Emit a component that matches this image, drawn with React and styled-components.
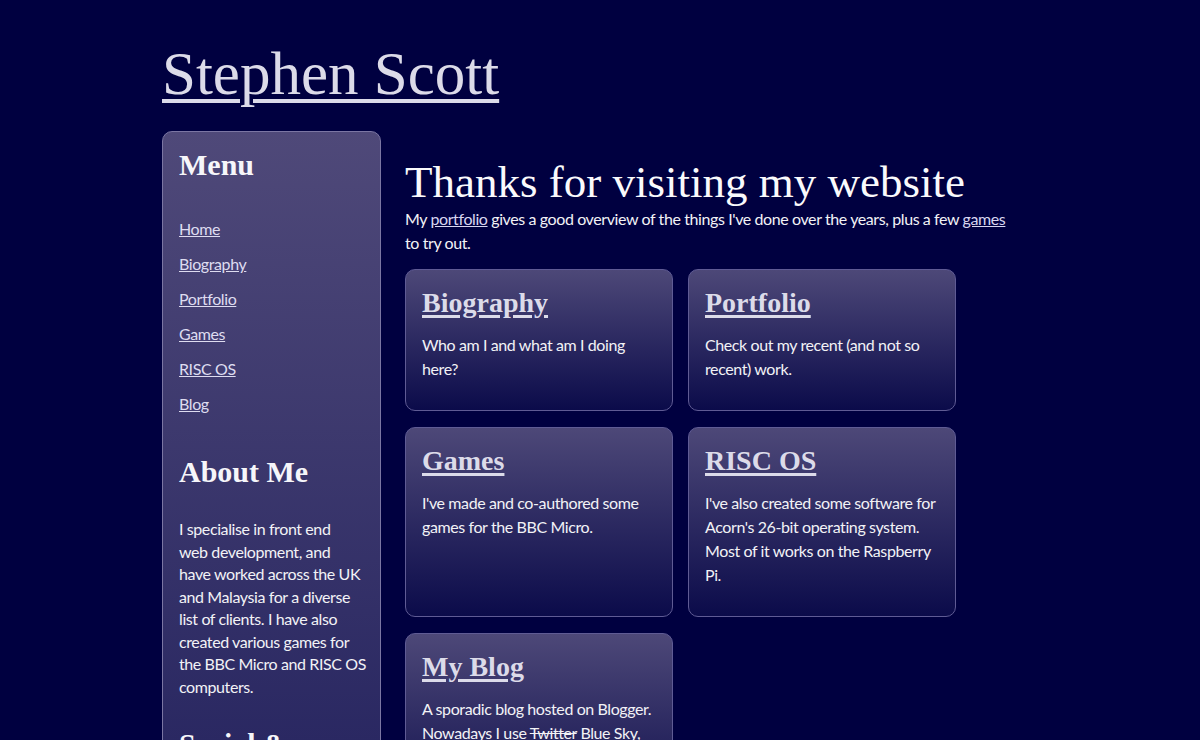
import React from "react";
import styled, { createGlobalStyle } from "styled-components";

const Global = createGlobalStyle`
  html, body { margin: 0; padding: 0; background: #000040; }
  body { font-family: "Lato", "Liberation Sans", sans-serif; color: #f2f2f6; letter-spacing: -0.4px; }
  * { box-sizing: border-box; }
`;

const serif = `"Liberation Serif", "DejaVu Serif", serif`;

const Page = styled.div`
  width: 876px;
  margin: 0 auto;
  padding-top: 37px;
`;

const SiteTitle = styled.h1`
  margin: 0;
  font-family: ${serif};
  font-size: 61px;
  line-height: 74px;
  font-weight: 400;
  letter-spacing: 0;
  a { color: #dcdbe9; text-decoration: underline; text-underline-offset: 5px; text-decoration-thickness: 4px; }
`;

const Layout = styled.div`
  display: grid;
  grid-template-columns: 219px 1fr;
  column-gap: 24px;
  margin-top: 20px;
  align-items: start;
`;

const Sidebar = styled.aside`
  border: 1px solid #7b76a3;
  border-radius: 10px;
  padding: 16px 16px 40px 16px;
  background: linear-gradient(to bottom, #4f4979 0, #2a2862 610px, #0a0a48 900px);
  min-height: 860px;
`;

const SideHeading = styled.h2`
  margin: ${(p) => p.$top || 0}px 0 0;
  font-family: ${serif};
  font-size: 30px;
  line-height: 34px;
  font-weight: 700;
  letter-spacing: 0;
  color: #f6f6fa;
`;

const MenuList = styled.ul`
  list-style: none;
  margin: 35px 0 0;
  padding: 0;
  display: flex;
  flex-direction: column;
  gap: 11px;
`;

const MenuItem = styled.li`
  font-size: 16px;
  line-height: 24px;
  a { color: #dedcf0; text-decoration: underline; }
`;

const SideText = styled.p`
  margin: 29px 0 0;
  font-size: 16px;
  line-height: 22.5px;
  color: #f2f2f6;
`;

const Keep = styled.span`
  white-space: nowrap;
`;

const Main = styled.main`
  padding-top: 26px;
`;

const Heading = styled.h1`
  margin: 0;
  font-family: ${serif};
  font-weight: 400;
  font-size: 45px;
  line-height: 50px;
  letter-spacing: 0;
  color: #fafafc;
`;

const Intro = styled.p`
  margin: 0;
  font-size: 16px;
  line-height: 24px;
  max-width: 610px;
  a { color: #d8d6f0; text-decoration: underline; }
`;

const Cards = styled.div`
  display: grid;
  grid-template-columns: 268px 268px;
  column-gap: 15px;
  row-gap: 16px;
  margin-top: 14px;
  align-items: stretch;
`;

const Card = styled.section`
  border: 1px solid #5f5b94;
  border-radius: 10px;
  padding: 16px 16px 29px;
  background: linear-gradient(to bottom, #4d4878 0%, #0b0b4a 100%);
`;

const CardTitle = styled.h2`
  margin: 0;
  font-family: ${serif};
  font-size: 28px;
  line-height: 34px;
  font-weight: 700;
  letter-spacing: 0;
  a { color: #dcdbe9; text-decoration: underline; text-decoration-thickness: 3px; text-underline-offset: 3px; }
`;

const CardText = styled.p`
  margin: 13px 0 0;
  font-size: 16px;
  line-height: 24px;
  color: #f2f2f6;
  s { text-decoration-thickness: 1px; }
`;

const menu = ["Home", "Biography", "Portfolio", "Games", "RISC OS", "Blog"];

const aboutLines = [
  "I specialise in front end",
  "web development, and",
  "have worked across the UK",
  "and Malaysia for a diverse",
  "list of clients. I have also",
  "created various games for",
  "the BBC Micro and RISC OS",
  "computers.",
];

const cards = [
  { title: "Biography", text: "Who am I and what am I doing here?" },
  { title: "Portfolio", text: "Check out my recent (and not so recent) work." },
  { title: "Games", text: "I've made and co-authored some games for the BBC Micro." },
  {
    title: "RISC OS",
    text: "I've also created some software for Acorn's 26-bit operating system. Most of it works on the Raspberry Pi.",
  },
  {
    title: "My Blog",
    text: (
      <>
        A sporadic blog hosted on Blogger. Nowadays I use <s>Twitter</s> Blue Sky, Mastodon or Threads for
        short updates.
      </>
    ),
  },
];

export default function App() {
  return (
    <>
      <Global />
      <Page>
        <SiteTitle>
          <a href="#">Stephen Scott</a>
        </SiteTitle>
        <Layout>
          <Sidebar>
            <SideHeading>Menu</SideHeading>
            <MenuList>
              {menu.map((m) => (
                <MenuItem key={m}>
                  <a href="#">{m}</a>
                </MenuItem>
              ))}
            </MenuList>
            <SideHeading $top={39}>About Me</SideHeading>
            <SideText>
              {aboutLines.map((l, i) => (
                <React.Fragment key={i}>
                  <Keep>{l}</Keep>{i < aboutLines.length - 1 ? " " : ""}
                </React.Fragment>
              ))}
            </SideText>
            <SideHeading $top={29}>Social &amp; Contact</SideHeading>
          </Sidebar>
          <Main>
            <Heading>Thanks for visiting my website</Heading>
            <Intro>
              My <a href="#">portfolio</a> gives a good overview of the things I've done over the years, plus a
              few <a href="#">games</a> to try out.
            </Intro>
            <Cards>
              {cards.map((c) => (
                <Card key={c.title}>
                  <CardTitle>
                    <a href="#">{c.title}</a>
                  </CardTitle>
                  <CardText>{c.text}</CardText>
                </Card>
              ))}
            </Cards>
          </Main>
        </Layout>
      </Page>
    </>
  );
}
